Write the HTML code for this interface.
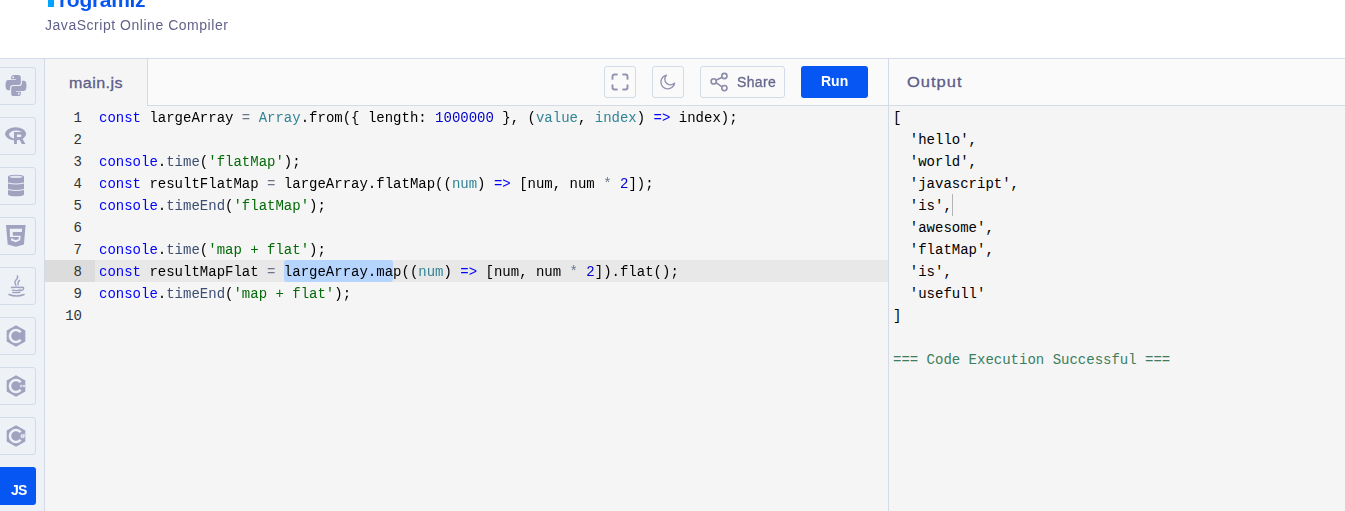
<!DOCTYPE html>
<html><head><meta charset="utf-8">
<style>
*{box-sizing:border-box;margin:0;padding:0}
html,body{width:1345px;height:511px;overflow:hidden;background:#fff;font-family:"Liberation Sans",sans-serif}
.ico{position:absolute;overflow:visible}
#hdr{position:absolute;left:0;top:0;width:1345px;height:59px;background:#fff;border-bottom:1px solid #d2dbe7}
#logoP{position:absolute;left:48px;top:0;width:6px;height:7px;background:#00a3ff}
#logo{position:absolute;left:59px;top:-12px;font-size:21px;font-weight:bold;color:#0556f3;letter-spacing:-0.3px;white-space:nowrap}
#sub{position:absolute;left:45px;top:17px;font-size:14px;color:#62628a;white-space:nowrap;letter-spacing:0.53px}
#side{position:absolute;left:0;top:59px;width:45px;height:452px;background:#eef1f6;border-right:1px solid #d2dbe7}
.sb{position:absolute;left:-5px;width:41px;height:38px;border:1px solid #d2dbe7;border-radius:3px;background:#eef1f6}
#js{position:absolute;left:-5px;top:408px;width:41px;height:38px;border-radius:3px;background:#0556f3;color:#fff;font-weight:bold;font-size:14px;padding:15px 0 0 15.5px;letter-spacing:-0.7px}
#tabbar{position:absolute;left:45px;top:59px;width:843px;height:47px;background:#fafafa}
#tab{position:absolute;left:0;top:0;width:103px;height:47px;background:#f5f5f5;border-right:1px solid #d2dbe7}
#tabbar .bline{position:absolute;left:103px;top:46px;right:0;height:1px;background:#d2dbe7}
#tab span{position:absolute;left:24px;top:15px;font-size:15px;font-weight:normal;-webkit-text-stroke:0.3px #5d5d89;color:#5d5d89;letter-spacing:0.4px;transform:scaleX(1.07);transform-origin:0 0}
.btn{position:absolute;top:7px;height:32px;border:1px solid #d2dbe7;border-radius:3px;background:#fafafa}
#share{position:absolute;left:737px;top:74px;font-size:14px;color:#66668c;-webkit-text-stroke:0.3px #66668c;letter-spacing:0.35px}
#run{position:absolute;left:756px;top:7px;width:67px;height:32px;background:#0556f3;border-radius:3px;color:#fff;font-weight:bold;font-size:14px;text-align:center;line-height:31px}
#editor{position:absolute;left:45px;top:106px;width:843px;height:405px;background:#f5f5f5}
#vsep{position:absolute;left:888px;top:59px;width:1px;height:452px;background:#d2dbe7}
#outhdr{position:absolute;left:889px;top:59px;width:456px;height:47px;background:#fafafa;border-bottom:1px solid #d2dbe7}
#outhdr span{position:absolute;left:18px;top:14px;font-size:15px;font-weight:normal;-webkit-text-stroke:0.3px #5d5d89;color:#5d5d89;letter-spacing:0.9px;transform:scaleX(1.1);transform-origin:0 0}
#out{position:absolute;left:889px;top:106px;width:456px;height:405px;background:#f5f5f5}
.code{font-family:"Liberation Mono",monospace;font-size:14px;line-height:22px;white-space:pre;color:#000}
.ln{position:absolute;left:0;width:50px;text-align:right;padding-right:13px;color:#333}
.cl{position:absolute;left:54px}
.k{color:#0000ff}.f{color:#3c4c72}.s{color:#036a07}.v{color:#318495}.o{color:#687687}.n{color:#0000cd}
#actg{position:absolute;left:0;top:154px;width:50px;height:22px;background:#dcdcdc}
#actl{position:absolute;left:50px;top:154px;width:793px;height:22px;background:#e8e8e8}
#sel{position:absolute;left:239px;top:154px;width:109px;height:22px;background:#b5d5ff;border-radius:3px}
#cur{position:absolute;left:952px;top:194px;width:1px;height:22px;background:#b4b4b4}
.ol{position:absolute;left:4px}
.ok{color:#3a7e5f}
.cl,#sub,#logo,#share,.gs{will-change:transform}
</style></head><body>
<div id="hdr"><div id="logoP"></div><div id="logo">rogramiz</div>
  <div id="sub">JavaScript Online Compiler</div>
</div>
<div id="side">
  <div class="sb" style="top:8px"></div>
  <div class="sb" style="top:58px"></div>
  <div class="sb" style="top:108px"></div>
  <div class="sb" style="top:158px"></div>
  <div class="sb" style="top:208px"></div>
  <div class="sb" style="top:258px"></div>
  <div class="sb" style="top:308px"></div>
  <div class="sb" style="top:358px"></div>
  <div id="js"><span class="gs" style="display:inline-block">JS</span></div>
</div>
<svg class="ico" style="left:5px;top:75px" width="21" height="21" viewBox="-0.5 0 21 21">
<path fill="#a0a2bf" d="M5.6 2.6Q5.6 0 8.4 0H12.6Q15.3 0 15.3 2.6V8Q15.3 10 13.3 10H7Q4.6 10 4.6 12.5V15.3H2.8Q0 15.3 0 10.3Q0 5.1 2.8 5.1H10.6V4.3H5.6Z"/><path fill="#a0a2bf" transform="rotate(180 10.5 10.5)" d="M5.6 2.6Q5.6 0 8.4 0H12.6Q15.3 0 15.3 2.6V8Q15.3 10 13.3 10H7Q4.6 10 4.6 12.5V15.3H2.8Q0 15.3 0 10.3Q0 5.1 2.8 5.1H10.6V4.3H5.6Z"/>
<circle cx="7.7" cy="2.3" r="0.95" fill="#eef1f6"/><circle cx="13.3" cy="18.7" r="0.95" fill="#eef1f6"/></svg>
<svg class="ico" style="left:4px;top:126px" width="24" height="19" viewBox="0 0 24 19">
<path fill="#a0a2bf" fill-rule="evenodd" d="M1 7.8A10.6 6.5 0 1 0 22.2 7.8A10.6 6.5 0 1 0 1 7.8ZM5.1 8.6A7.15 4.2 0 1 0 19.4 8.6A7.15 4.2 0 1 0 5.1 8.6Z"/>
<path fill="#a0a2bf" fill-rule="evenodd" d="M10 5.9H17.2Q20.4 5.9 20.4 9.2Q20.4 11.6 18.3 12.4L21.4 17.9H17.8L15.2 12.8H12.9V17.9H10ZM12.9 8.5V10.9H16.3Q17.4 10.9 17.4 9.7Q17.4 8.5 16.3 8.5Z"/></svg>
<svg class="ico" style="left:7px;top:174px" width="18" height="23" viewBox="0 0 18 23">
<path fill="#a0a2bf" d="M1 2.9Q1 0.8 9 0.8Q17 0.8 17 2.9V8.6Q9 10.6 1 8.6Z"/>
<path fill="#a0a2bf" d="M1 9.6Q9 11.6 17 9.6V14.9Q9 16.9 1 14.9Z"/>
<path fill="#a0a2bf" d="M1 15.9Q9 17.9 17 15.9V20.2Q17 22.2 9 22.2Q1 22.2 1 20.2Z"/>
<ellipse cx="9" cy="2.9" rx="6.3" ry="1.1" fill="#e3e5ee"/></svg>
<svg class="ico" style="left:6px;top:225px" width="20" height="22" viewBox="0 0 20 22">
<path fill="#a0a2bf" d="M0 0H19.6L17.9 19.4L9.8 21.8L1.7 19.4Z"/>
<path fill="#eef1f6" d="M3.75 3.8H16.1L15.8 7.1H6.8V10.7H14.6L14.2 15.3L9.8 17.2L5.1 15.6L5 13.4H7.04V14.2L9.8 15L12.6 14.2L12.8 12.1H4Z"/></svg>
<svg class="ico" style="left:8px;top:275px" width="17" height="22" viewBox="0 0 17 22">
<g fill="none" stroke="#a0a2bf" stroke-linecap="round">
<path stroke-width="1.4" d="M9.3 0.8Q10.5 2.5 8.2 4.8Q5.8 7.2 8 10.3"/>
<path stroke-width="1.3" d="M11.6 5.4Q9.3 6.8 10.2 9.8"/>
<path stroke-width="1.5" d="M3.5 12.6Q8.5 11.8 12.6 12.5"/>
<path stroke-width="1.3" d="M4.3 15.2Q8.5 16 12.2 15"/>
<path stroke-width="1.3" d="M12.8 12.5Q16.2 11.6 15.6 13.8Q15 15.5 12 15.9"/>
<path stroke-width="1.3" d="M4.6 17.3Q8.5 18 11.8 17.3"/>
<path stroke-width="1.6" d="M1 19.5Q8.5 22.5 16 19.5"/>
</g></svg>
<svg class="ico" style="left:6px;top:325px" width="20" height="22" viewBox="0 0 20 22">
<path fill="#a0a2bf" d="M10 0.2L19.3 5.6V16.4L10 21.8L0.7 16.4V5.6Z"/>
<path fill="none" stroke="#eef1f6" stroke-width="2.6" d="M14.6 7.2A6 6 0 1 0 14.6 14.8"/></svg>
<svg class="ico" style="left:6px;top:375px" width="20" height="22" viewBox="0 0 20 22">
<path fill="#a0a2bf" d="M10 0.2L19.3 5.6V16.4L10 21.8L0.7 16.4V5.6Z"/>
<path fill="none" stroke="#eef1f6" stroke-width="2.6" d="M14.6 7.2A6 6 0 1 0 14.6 14.8"/><path stroke="#eef1f6" stroke-width="1" d="M13.8 11H16.4M15.1 9.7V12.3M16.8 11H19.2M18 9.8V12.2"/></svg>
<svg class="ico" style="left:6px;top:425px" width="20" height="22" viewBox="0 0 20 22">
<path fill="#a0a2bf" d="M10 0.2L19.3 5.6V16.4L10 21.8L0.7 16.4V5.6Z"/>
<path fill="none" stroke="#eef1f6" stroke-width="2.6" d="M14.6 7.2A6 6 0 1 0 14.6 14.8"/><path stroke="#eef1f6" stroke-width="0.9" d="M16 8.8L15.5 13.2M18 8.8L17.5 13.2M14.7 10.2H19M14.4 11.8H18.7"/></svg>
<div id="tabbar">
  <div id="tab"><span>main.js</span></div>
  <div class="bline"></div>
  <div class="btn" style="left:559px;width:32px"></div>
  <div class="btn" style="left:607px;width:32px"></div>
  <div class="btn" style="left:655px;width:85px"></div>
  <div id="run"><span class="gs" style="display:inline-block">Run</span></div>
</div>
<svg class="ico" style="left:611px;top:73px" width="18" height="18" viewBox="0 0 18 18">
<g fill="none" stroke="#9293b1" stroke-width="1.9" stroke-linecap="round" stroke-linejoin="round">
<path d="M1.5 5.9V3.5Q1.5 1.5 3.5 1.5H5.9"/><path d="M12.1 1.5H14.5Q16.5 1.5 16.5 3.5V5.9"/>
<path d="M16.5 12.1V14.5Q16.5 16.5 14.5 16.5H12.1"/><path d="M5.9 16.5H3.5Q1.5 16.5 1.5 14.5V12.1"/></g></svg>
<svg class="ico" style="left:660px;top:74px" width="16" height="16" viewBox="0 0 16 16">
<path fill="none" stroke="#9293b1" stroke-width="1.4" stroke-linejoin="round" d="M6.4 1.2A6.9 6.9 0 1 0 14.6 9.1A5.2 5.2 0 0 1 6.4 1.2Z"/></svg>
<svg class="ico" style="left:709px;top:72px" width="20" height="20" viewBox="0 0 20 20">
<g fill="none" stroke="#8c8cab" stroke-width="1.6">
<circle cx="15.4" cy="4" r="2.6"/><circle cx="4.7" cy="9.4" r="2.6"/><circle cx="15.4" cy="16.1" r="2.6"/>
<path d="M7 8.2L13.1 5.2M7 10.7L13.1 14.8"/></g></svg>
<div id="share">Share</div>
<div id="editor" class="code">
<div id="actg"></div><div id="actl"></div><div id="sel"></div>
<div class="ln" style="top:1px">1</div><div class="cl" style="top:1px"><span class="k">const</span> largeArray <span class="o">=</span> <span class="v">Array</span>.from({ length: <span class="n">1000000</span> }, (<span class="v">value</span>, <span class="v">index</span>) <span class="k">=&gt;</span> index);</div>
<div class="ln" style="top:23px">2</div><div class="cl" style="top:23px"></div>
<div class="ln" style="top:45px">3</div><div class="cl" style="top:45px"><span class="k">console</span>.<span class="f">time</span>(<span class="s">'flatMap'</span>);</div>
<div class="ln" style="top:67px">4</div><div class="cl" style="top:67px"><span class="k">const</span> resultFlatMap <span class="o">=</span> largeArray.flatMap((<span class="v">num</span>) <span class="k">=&gt;</span> [num, num <span class="o">*</span> <span class="n">2</span>]);</div>
<div class="ln" style="top:89px">5</div><div class="cl" style="top:89px"><span class="k">console</span>.<span class="f">timeEnd</span>(<span class="s">'flatMap'</span>);</div>
<div class="ln" style="top:111px">6</div><div class="cl" style="top:111px"></div>
<div class="ln" style="top:133px">7</div><div class="cl" style="top:133px"><span class="k">console</span>.<span class="f">time</span>(<span class="s">'map + flat'</span>);</div>
<div class="ln" style="top:155px">8</div><div class="cl" style="top:155px"><span class="k">const</span> resultMapFlat <span class="o">=</span> largeArray.map((<span class="v">num</span>) <span class="k">=&gt;</span> [num, num <span class="o">*</span> <span class="n">2</span>]).flat();</div>
<div class="ln" style="top:177px">9</div><div class="cl" style="top:177px"><span class="k">console</span>.<span class="f">timeEnd</span>(<span class="s">'map + flat'</span>);</div>
<div class="ln" style="top:199px">10</div><div class="cl" style="top:199px"></div>
</div>
<div id="vsep"></div>
<div id="outhdr"><span>Output</span></div>
<div id="out" class="code">
<div class="ol" style="top:1px">[</div>
<div class="ol" style="top:23px">  'hello',</div>
<div class="ol" style="top:45px">  'world',</div>
<div class="ol" style="top:67px">  'javascript',</div>
<div class="ol" style="top:89px">  'is',</div>
<div class="ol" style="top:111px">  'awesome',</div>
<div class="ol" style="top:133px">  'flatMap',</div>
<div class="ol" style="top:155px">  'is',</div>
<div class="ol" style="top:177px">  'usefull'</div>
<div class="ol" style="top:199px">]</div>
<div class="ol" style="top:221px"></div>
<div class="ol" style="top:243px"><span class="ok">=== Code Execution Successful ===</span></div>
</div>
<div id="cur"></div>
</body></html>
